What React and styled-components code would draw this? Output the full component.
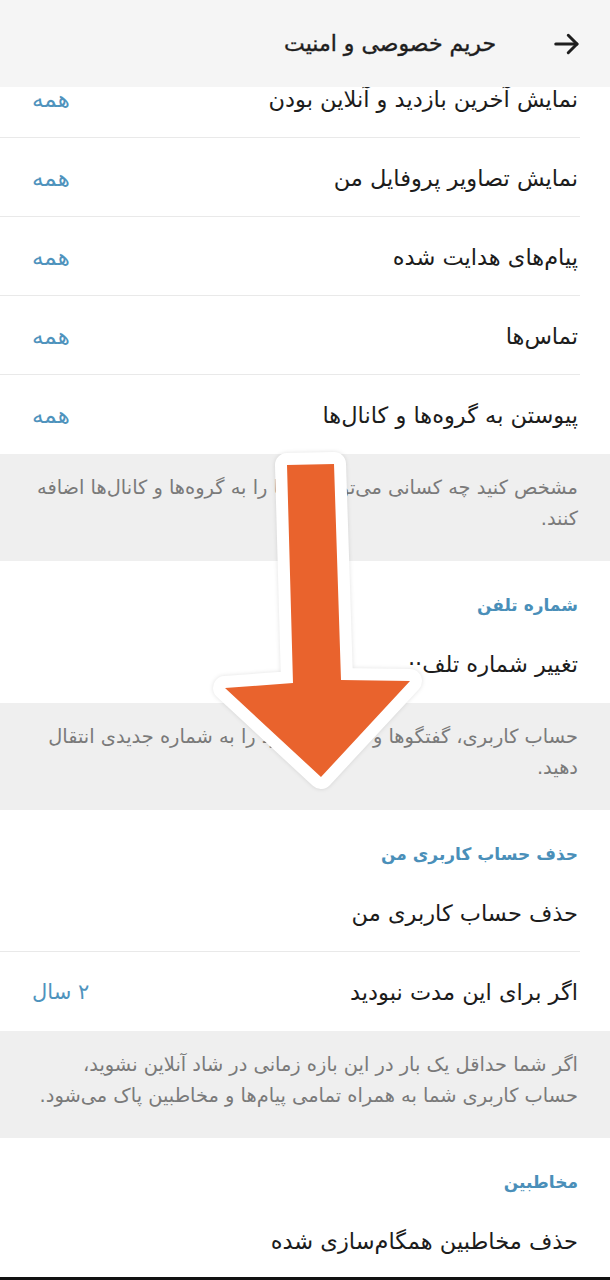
import React from "react";
import styled, { createGlobalStyle } from "styled-components";

const Global = createGlobalStyle`
  html, body { margin: 0; padding: 0; background: #fff; }
  body { font-family: "DejaVu Sans", "Noto Sans", sans-serif; }
  * { box-sizing: border-box; }
`;

const Screen = styled.div`
  position: relative;
  width: 610px;
  height: 1280px;
  overflow: hidden;
  display: flex;
  flex-direction: column;
  direction: rtl;
  background: #fff;
  border-bottom: 3px solid #111;
`;

const Header = styled.header`
  flex: 0 0 87px;
  display: flex;
  align-items: center;
  gap: 56px;
  padding: 0 28px 0 0;
  background: #f5f5f5;
`;

const BackIcon = styled.svg`
  width: 30px;
  height: 30px;
  flex: 0 0 auto;
`;

const Title = styled.h1`
  margin: 0;
  font-size: 22px;
  font-weight: 400;
  color: #1e1e1e;
  -webkit-text-stroke: 0.4px #1e1e1e;
`;

const Scroll = styled.div`
  flex: 1;
  overflow: hidden;
`;

const Content = styled.div`
  margin-top: -28px;
  display: flex;
  flex-direction: column;
`;

const Row = styled.div`
  height: 79px;
  display: flex;
  align-items: center;
  justify-content: space-between;
  padding: 0 32px 0 32px;
  position: relative;
  &::after {
    content: "";
    display: ${(p) => (p.$divider ? "block" : "none")};
    position: absolute;
    bottom: 0;
    right: 30px;
    left: 0;
    height: 1px;
    background: #e9e9e9;
  }
`;

const Label = styled.span`
  font-size: 22.5px;
  color: #1c1c1c;
  white-space: nowrap;
`;

const Value = styled.span`
  font-size: ${(p) => p.$size || 21}px;
  color: #4f93bd;
`;

const Info = styled.div`
  background: #efefef;
  padding: 18px 32px 27px 28px;
  font-size: 19.4px;
  line-height: 31px;
  color: #7a7a7a;
  white-space: nowrap;
`;

const SectionTitle = styled.div`
  height: 63px;
  padding: 29px 32px 0 32px;
  font-size: 17px;
  line-height: 30px;
  font-weight: 700;
  color: #4a8fb9;
`;

const ArrowSvg = styled.svg`
  position: absolute;
  left: 200px;
  top: 440px;
  width: 230px;
  height: 370px;
  overflow: visible;
  filter: drop-shadow(0 0 2px rgba(0, 0, 0, 0.12));
`;

const rows = [
  "نمایش آخرین بازدید و آنلاین بودن",
  "نمایش تصاویر پروفایل من",
  "پیام‌های هدایت شده",
  "تماس‌ها",
  "پیوستن به گروه‌ها و کانال‌ها",
];

export default function App() {
  return (
    <>
      <Global />
      <Screen>
        <Header>
          <BackIcon viewBox="0 0 24 24" fill="none" stroke="#1e1e1e" strokeWidth="2.4" strokeLinecap="round" strokeLinejoin="round">
            <path d="M3 12h17" />
            <path d="M13 5l7 7-7 7" />
          </BackIcon>
          <Title>حریم خصوصی و امنیت</Title>
        </Header>
        <Scroll>
          <Content>
            {rows.map((r, i) => (
              <Row key={r} $divider={i < rows.length - 1}>
                <Label>{r}</Label>
                <Value $size={23}>همه</Value>
              </Row>
            ))}
            <Info>
              مشخص کنید چه کسانی می‌توانند شما را به گروه‌ها و کانال‌ها اضافه
              <br />
              کنند.
            </Info>
            <SectionTitle>شماره تلفن</SectionTitle>
            <Row>
              <Label>تغییر شماره تلف··</Label>
            </Row>
            <Info>
              حساب کاربری، گفتگوها و اطلاعات خود را به شماره جدیدی انتقال
              <br />
              دهید.
            </Info>
            <SectionTitle>حذف حساب کاربری من</SectionTitle>
            <Row $divider>
              <Label>حذف حساب کاربری من</Label>
            </Row>
            <Row>
              <Label>اگر برای این مدت نبودید</Label>
              <Value>۲ سال</Value>
            </Row>
            <Info>
              اگر شما حداقل یک بار در این بازه زمانی در شاد آنلاین نشوید،
              <br />
              حساب کاربری شما به همراه تمامی پیام‌ها و مخاطبین پاک می‌شود.
            </Info>
            <SectionTitle>مخاطبین</SectionTitle>
            <Row>
              <Label>حذف مخاطبین همگام‌سازی شده</Label>
            </Row>
          </Content>
        </Scroll>
        <ArrowSvg viewBox="0 0 230 370">
          <polygon
            points="87,25 134,24 141,240 210,241 121,337 25,248 93,243"
            fill="#e9632d"
            stroke="#ffffff"
            strokeWidth="24"
            strokeLinejoin="round"
            paintOrder="stroke"
          />
        </ArrowSvg>
      </Screen>
    </>
  );
}
